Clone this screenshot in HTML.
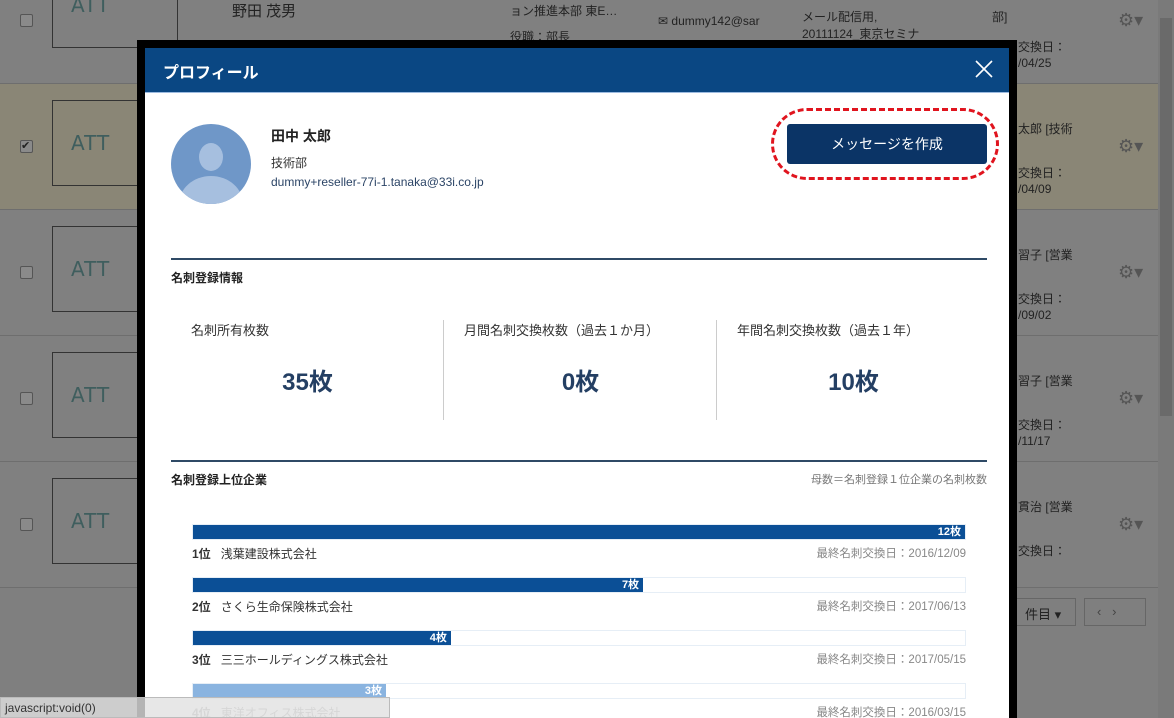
<!DOCTYPE html>
<html style="overflow:hidden;width:1174px;height:718px;background:#7e7e7e"><head><meta charset="utf-8"><style>
*{box-sizing:border-box;margin:0;padding:0}
body{width:1174px;height:718px;overflow:hidden;position:relative;font-family:"Liberation Sans","Noto Sans CJK JP",sans-serif;color:#333}
.bg{position:absolute;left:0;top:0;width:1174px;height:718px;background:#7f7f7f}
.row{position:absolute;left:0;width:1158px;height:126px;border-bottom:1px solid #6e6e6e;background:#808080}
.cb{position:absolute;left:20px;width:13px;height:13px;border:1px solid #555;background:#8a8a8a;border-radius:2px}
.card{position:absolute;left:52px;width:126px;height:86px;border:1px solid #333;background:#808080}
.card span{position:absolute;left:18px;top:30px;font-size:20px;color:#3f5e5e;letter-spacing:1px;font-family:"DejaVu Sans",sans-serif}
.gear{position:absolute;left:1118px;font-size:18px;color:#555}
.bt{position:absolute;font-size:12px;color:#222}
.modal{position:absolute;left:137px;top:40px;width:880px;height:678px;background:#000;overflow:hidden}
.inner{position:absolute;left:8px;top:8px;width:864px;height:700px;background:#fff}
.hd{height:45px;background:#0a4783;color:#fff;font-weight:bold;font-size:16px;padding:11px 18px;border-bottom:1px solid #9dbbe0;position:relative}
.x{position:absolute;right:14px;top:10px;width:22px;height:22px}
.sec{position:absolute;left:26px;width:816px;border-top:2px solid #2f4a66;font-size:12px;font-weight:bold;color:#222;padding-top:9px}
.stat{position:absolute;width:273px;height:100px}
.stat .l{font-size:13px;color:#333;position:absolute;left:20px;top:0}
.stat .v{position:absolute;left:0;width:100%;top:42px;text-align:center;font-size:24px;font-weight:bold;color:#243f63}
.bar{position:absolute;left:47px;width:774px;height:16px;border:1px solid #e6eef6;background:#fff}
.bar div{height:100%;background:#0b4f96;color:#fff;font-size:11px;font-weight:bold;text-align:right;padding-right:4px;line-height:15px}
.rk{position:absolute;left:47px;width:774px;font-size:12px;color:#333}
.rk b{margin-right:10px}
.rk .d{position:absolute;right:0;top:0;color:#888;font-size:11.5px}
</style></head><body>
<div class="bg"></div>
<div class="row" style="top:-42px"><div class="cb" style="top:56px"></div><div class="card" style="top:4px"><span>ATT</span></div></div>
<div class="row" style="top:84px;background:#8a8676"><div class="cb" style="top:56px;color:#222;font-size:11px;line-height:10px">✔</div><div class="card" style="top:16px;background:#8a8676"><span>ATT</span></div></div>
<div class="row" style="top:210px"><div class="cb" style="top:56px"></div><div class="card" style="top:16px"><span>ATT</span></div></div>
<div class="row" style="top:336px"><div class="cb" style="top:56px"></div><div class="card" style="top:16px"><span>ATT</span></div></div>
<div class="row" style="top:462px"><div class="cb" style="top:56px"></div><div class="card" style="top:16px"><span>ATT</span></div></div>
<div class="bt" style="left:232px;top:0;font-size:15px">野田 茂男</div>
<div class="bt" style="left:510px;top:2px">ョン推進本部 東E…</div>
<div class="bt" style="left:510px;top:28px">役職：部長</div>
<div class="bt" style="left:658px;top:14px">✉ dummy142@sar</div>
<div class="bt" style="left:802px;top:8px">メール配信用,</div>
<div class="bt" style="left:802px;top:25px">20111124_東京セミナ</div>
<div class="bt" style="left:992px;top:8px">部]</div>
<div class="gear" style="top:10px">⚙▾</div><div class="gear" style="top:136px">⚙▾</div><div class="gear" style="top:262px">⚙▾</div><div class="gear" style="top:388px">⚙▾</div><div class="gear" style="top:514px">⚙▾</div>
<div class="bt" style="left:1018px;top:38px">交換日：</div><div class="bt" style="left:1018px;top:56px">/04/25</div>
<div class="bt" style="left:1018px;top:120px">太郎 [技術</div><div class="bt" style="left:1018px;top:164px">交換日：</div><div class="bt" style="left:1018px;top:182px">/04/09</div>
<div class="bt" style="left:1018px;top:246px">習子 [営業</div><div class="bt" style="left:1018px;top:290px">交換日：</div><div class="bt" style="left:1018px;top:308px">/09/02</div>
<div class="bt" style="left:1018px;top:372px">習子 [営業</div><div class="bt" style="left:1018px;top:416px">交換日：</div><div class="bt" style="left:1018px;top:434px">/11/17</div>
<div class="bt" style="left:1018px;top:498px">貫治 [営業</div><div class="bt" style="left:1018px;top:542px">交換日：</div>
<div style="position:absolute;left:1017px;top:598px;width:59px;height:28px;border:1px solid #666;border-left:none;font-size:13px;padding:5px 8px;color:#222">件目 ▾</div>
<div style="position:absolute;left:1084px;top:598px;width:62px;height:28px;border:1px solid #666;font-size:13px;padding:5px 12px;color:#444">‹ &nbsp; ›</div>
<div style="position:absolute;left:1158px;top:0;width:16px;height:718px;background:#7a7a7a"><div style="position:absolute;left:2px;top:18px;width:12px;height:398px;background:#6a6a6a"></div></div>
<div class="modal"><div class="inner">
<div class="hd">プロフィール<svg class="x" viewBox="0 0 22 22"><path d="M3 3L19 19M19 3L3 19" stroke="#fff" stroke-width="1.6"/></svg></div>
<svg style="position:absolute;left:26px;top:76px" width="80" height="80" viewBox="0 0 80 80"><defs><clipPath id="c"><circle cx="40" cy="40" r="40"/></clipPath></defs><circle cx="40" cy="40" r="40" fill="#6f97c8"/><g clip-path="url(#c)" fill="#a6bfdf"><ellipse cx="40" cy="33" rx="12" ry="14"/><ellipse cx="40" cy="80" rx="32" ry="28"/></g></svg>
<div style="position:absolute;left:126px;top:78px;font-size:14px;font-weight:bold;color:#222">田中 太郎</div>
<div style="position:absolute;left:126px;top:106px;font-size:12px">技術部</div>
<div style="position:absolute;left:126px;top:127px;font-size:12px;color:#2b4466">dummy+reseller-77i-1.tanaka@33i.co.jp</div>
<div style="position:absolute;left:626px;top:60px;width:228px;height:72px;border:3px dashed #e0141e;border-radius:36px"></div>
<div style="position:absolute;left:642px;top:76px;width:200px;height:40px;background:#0b3466;border-radius:3px;color:#fff;font-size:14px;text-align:center;line-height:40px">メッセージを作成</div>
<div class="sec" style="top:210px">名刺登録情報</div>
<div class="stat" style="left:26px;top:272px"><div class="l">名刺所有枚数</div><div class="v">35枚</div></div>
<div style="position:absolute;left:298px;top:272px;width:1px;height:100px;background:#ccc"></div>
<div class="stat" style="left:299px;top:272px"><div class="l">月間名刺交換枚数（過去１か月）</div><div class="v">0枚</div></div>
<div style="position:absolute;left:571px;top:272px;width:1px;height:100px;background:#ccc"></div>
<div class="stat" style="left:572px;top:272px"><div class="l">年間名刺交換枚数（過去１年）</div><div class="v">10枚</div></div>
<div class="sec" style="top:412px">名刺登録上位企業<span style="position:absolute;right:0;top:9px;font-weight:normal;color:#777;font-size:11px">母数＝名刺登録１位企業の名刺枚数</span></div>
<div class="bar" style="top:476px"><div style="width:100%">12枚</div></div>
<div class="rk" style="top:497px"><b>1位</b>浅葉建設株式会社<span class="d">最終名刺交換日：2016/12/09</span></div>
<div class="bar" style="top:529px"><div style="width:58.3%">7枚</div></div>
<div class="rk" style="top:550px"><b>2位</b>さくら生命保険株式会社<span class="d">最終名刺交換日：2017/06/13</span></div>
<div class="bar" style="top:582px"><div style="width:33.4%">4枚</div></div>
<div class="rk" style="top:603px"><b>3位</b>三三ホールディングス株式会社<span class="d">最終名刺交換日：2017/05/15</span></div>
<div class="bar" style="top:635px"><div style="width:25%;background:#8ab4e0">3枚</div></div>
<div class="rk" style="top:656px;color:#aaa"><b>4位</b>東洋オフィス株式会社<span class="d">最終名刺交換日：2016/03/15</span></div>
</div></div>
<div style="position:absolute;left:0;top:697px;width:390px;height:21px;background:rgba(225,225,225,0.8);border:1px solid #bbb;font-size:12px;color:#333;padding:3px 4px">javascript:void(0)</div>
</body></html>
